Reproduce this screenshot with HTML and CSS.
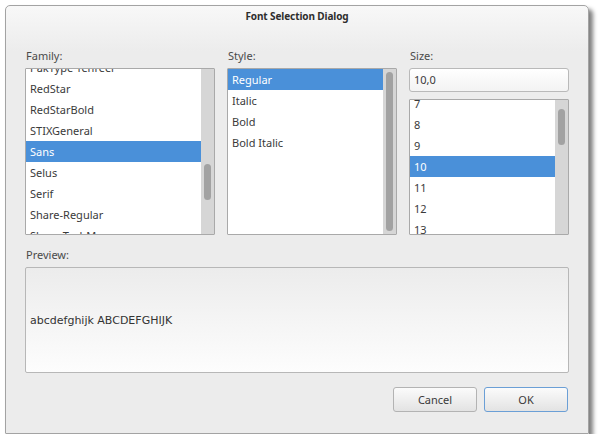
FILE: index.html
```html
<!DOCTYPE html>
<html>
<head>
<meta charset="utf-8">
<link rel="stylesheet" href="styles.css">
</head>
<body>
<div class="dialog">
  <div class="titlebar">Font Selection Dialog</div>
  <div class="content">
    <div class="pickers">
      <div class="col">
        <div class="label">Family:</div>
        <div class="listbox family">
          <ul class="items" style="margin-top:-12px">
            <li>PakType Tehreer</li>
            <li>RedStar</li>
            <li>RedStarBold</li>
            <li>STIXGeneral</li>
            <li class="sel">Sans</li>
            <li>Selus</li>
            <li>Serif</li>
            <li>Share-Regular</li>
            <li>Share-TechMono</li>
          </ul>
          <div class="scrollbar"><div class="thumb" style="margin-top:95px;height:36px"></div></div>
        </div>
      </div>
      <div class="col">
        <div class="label">Style:</div>
        <div class="listbox style">
          <ul class="items">
            <li class="sel">Regular</li>
            <li>Italic</li>
            <li>Bold</li>
            <li>Bold Italic</li>
          </ul>
          <div class="scrollbar"><div class="thumb" style="margin-top:3px;height:159px"></div></div>
        </div>
      </div>
      <div class="col">
        <div class="label">Size:</div>
        <div class="field">10,0</div>
        <div class="listbox size">
          <ul class="items" style="margin-top:-7px">
            <li>7</li>
            <li>8</li>
            <li>9</li>
            <li class="sel">10</li>
            <li>11</li>
            <li>12</li>
            <li>13</li>
          </ul>
          <div class="scrollbar"><div class="thumb" style="margin-top:9px;height:36px"></div></div>
        </div>
      </div>
    </div>
    <div class="label preview-label">Preview:</div>
    <div class="preview">abcdefghijk ABCDEFGHIJK</div>
    <div class="buttons">
      <button class="btn">Cancel</button>
      <button class="btn default">OK</button>
    </div>
  </div>
</div>
</body>
</html>
```

FILE: styles.css
```css
html, body {
  margin: 0;
  padding: 0;
  background: #ffffff;
}
body {
  padding: 5px 0 0 5px;
  font-family: "Noto Sans", "DejaVu Sans", sans-serif;
  font-size: 11px;
  color: #3a3a3a;
}
.dialog {
  box-sizing: border-box;
  width: 584px;
  height: 429px;
  border: 1px solid #a3a3a3;
  border-radius: 5px 5px 1px 1px;
  background: linear-gradient(#f8f8f8, #ececec 45px, #ececec);
  box-shadow: 4px 4px 4px rgba(0, 0, 0, 0.5);
  display: flex;
  flex-direction: column;
}
.titlebar {
  height: 21px;
  line-height: 21px;
  text-align: center;
  font-weight: bold;
  font-size: 10px;
  letter-spacing: -0.1px;
  color: #2e2e2e;
}
.content {
  padding: 22px 19px 0 19px;
  display: flex;
  flex-direction: column;
}
.pickers {
  display: grid;
  grid-template-columns: 190px 170px 160px;
  column-gap: 12px;
}
.col {
  display: flex;
  flex-direction: column;
}
.label {
  height: 14px;
  line-height: 14px;
  margin: 0 0 5px 1px;
  color: #4a4a4a;
}
.listbox {
  box-sizing: border-box;
  height: 167px;
  border: 1px solid #a9a9a9;
  border-radius: 1px;
  background: #ffffff;
  display: flex;
  overflow: hidden;
}
.listbox.size {
  height: 136px;
}
.items {
  list-style: none;
  margin: 0;
  padding: 0;
  flex: 1;
  align-self: flex-start;
}
.items li {
  height: 21px;
  line-height: 21px;
  padding-left: 4px;
  white-space: nowrap;
  color: #3a3a3a;
}
.items li.sel {
  background: #4a90d9;
  color: #ffffff;
}
.scrollbar {
  width: 13px;
  flex: none;
  align-self: stretch;
  background: #d6d6d6;
  display: flex;
  flex-direction: column;
  align-items: center;
}
.thumb {
  width: 7px;
  border-radius: 4px;
  background: #a2a2a2;
}
.field {
  box-sizing: border-box;
  height: 24px;
  line-height: 22px;
  padding-left: 4px;
  margin-bottom: 7px;
  border: 1px solid #b9b9b9;
  border-radius: 3px;
  background: linear-gradient(#ffffff, #f3f3f3);
  color: #3a3a3a;
}
.preview-label {
  margin-top: 13px;
}
.preview {
  box-sizing: border-box;
  height: 106px;
  border: 1px solid #b7b7b7;
  border-radius: 2px;
  background: linear-gradient(#ececec, #fdfdfd);
  display: flex;
  align-items: center;
  padding-left: 4px;
  font-family: "DejaVu Sans", sans-serif;
  font-size: 11px;
  color: #333333;
}
.buttons {
  margin-top: 14px;
  display: flex;
  justify-content: flex-end;
  gap: 7px;
  padding-right: 1px;
}
.btn {
  box-sizing: border-box;
  width: 84px;
  height: 25px;
  border: 1px solid #b3b3b3;
  border-radius: 3px;
  background: linear-gradient(#fbfbfb, #e3e3e3);
  font-family: "Noto Sans", "DejaVu Sans", sans-serif;
  font-size: 11px;
  color: #3a3a3a;
  padding: 0;
}
.btn.default {
  border-color: #6b9fd6;
}
```
